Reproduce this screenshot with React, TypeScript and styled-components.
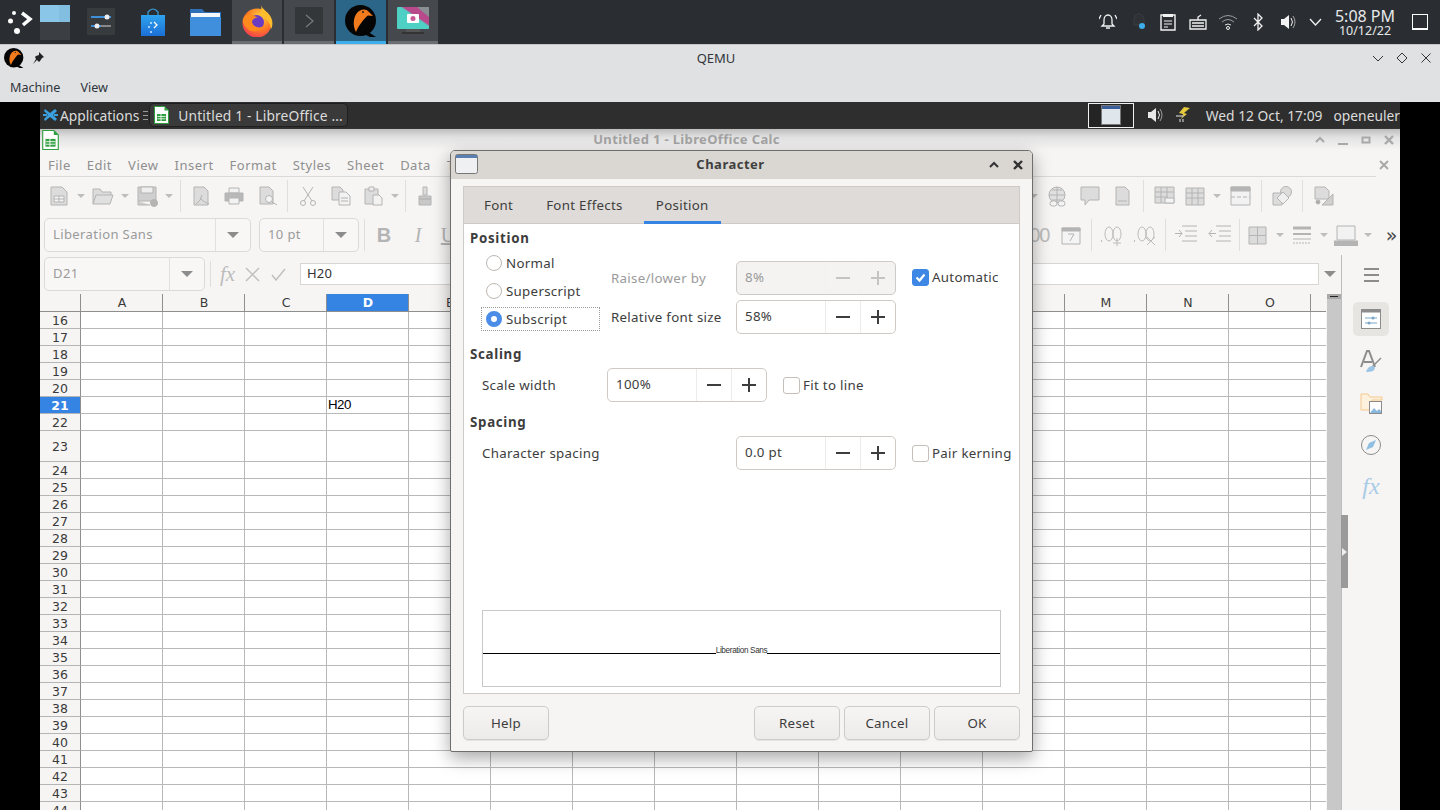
import * as React from 'react';
import styled, {createGlobalStyle} from 'styled-components';

const GlobalStyle = createGlobalStyle`
  html, body {
    margin: 0;
    padding: 0;
    background: #000;
    font-family: "Noto Sans", "Liberation Sans", sans-serif;
  }
  * { box-sizing: border-box; }
`;

const Screen = styled.div`
  position: relative;
  width: 1440px;
  height: 810px;
  overflow: hidden;
  background: #000;
  display: flex;
  flex-direction: column;
`;

/* host panel */
const HostPanel = styled.div`
  height: 44px;
  flex: none;
  background: #2a2e32;
  display: flex;
  align-items: stretch;
  color: #fcfcfc;
`;
const Launcher = styled.div`
  width: 40px;
  display: flex;
  align-items: center;
`;
const Pager = styled.div`
  width: 30px;
  margin-right: 5px;
  display: flex;
  align-items: center;
`;
const PanelSlot = styled.div`
  width: 52px;
  display: flex;
  align-items: center;
  justify-content: center;
`;
const TaskList = styled.div`
  display: flex;
  gap: 2px;
  margin-left: 1px;
`;
const TaskButton = styled.div<{$active?: boolean}>`
  width: 50px;
  display: flex;
  align-items: center;
  justify-content: center;
  padding-top: 1px;
  background: ${p => (p.$active ? '#2b6688' : '#45494e')};
  border-bottom: 3px solid ${p => (p.$active ? '#3daee9' : '#6a6e72')};
`;
const Tray = styled.div`
  margin-left: auto;
  display: flex;
  align-items: center;
`;
const TraySlot = styled.div<{$w: number; $gap: number}>`
  width: ${p => p.$w}px;
  margin-left: ${p => p.$gap}px;
  display: flex;
  justify-content: center;
`;
const Clock = styled.div`
  width: 62px;
  margin-left: 12px;
  text-align: center;
  font-size: 16px;
  line-height: 15px;
  padding-top: 2px;
  color: #e6e8ea;
  small {
    display: block;
    font-size: 12.5px;
    line-height: 13px;
  }
`;
const ShowDesktop = styled.div`
  width: 16px;
  height: 16px;
  margin: 0 12px 0 16px;
  border: 1.5px solid #fcfcfc;
  border-bottom-width: 2px;
`;

/* QEMU window frame */
const QemuFrame = styled.div`
  height: 58px;
  flex: none;
  background: #dfe1e3;
  border-top: 1px solid #c4c6c8;
  color: #31363b;
`;
const QemuTitle = styled.div`
  height: 26px;
  display: flex;
  align-items: center;
  padding: 0 8px 0 4px;
  gap: 8px;
`;
const QemuName = styled.div`
  flex: 1;
  text-align: center;
  font-size: 13px;
  padding-left: 16px;
`;
const FrameControls = styled.div`
  display: flex;
  gap: 12px;
`;
const QemuMenu = styled.div`
  height: 31px;
  display: flex;
  align-items: center;
  padding: 2px 0 0 10px;
  gap: 20px;
  font-size: 12.6px;
`;

/* guest desktop */
const Guest = styled.div`
  flex: 1;
  margin: 0 40px;
  display: flex;
  flex-direction: column;
  min-height: 0;
  background: #f6f5f4;
`;
const GuestPanel = styled.div`
  height: 26px;
  flex: none;
  background: #2e2e2e;
  color: #dcdcdc;
  display: flex;
  align-items: center;
  font-size: 13.8px;
  white-space: nowrap;
  overflow: hidden;
`;
const AppsLabel = styled.span`
  margin-left: 2px;
`;
const Handle = styled.span`
  width: 5px;
  height: 9px;
  margin: 0 1px 0 4px;
  border-top: 1px solid #999;
  border-bottom: 1px solid #999;
  &::after {
    content: '';
    display: block;
    height: 1px;
    margin-top: 3px;
    background: #999;
  }
`;
const GuestTask = styled.div`
  width: 199px;
  height: 24px;
  display: flex;
  align-items: center;
  gap: 9px;
  padding-left: 4px;
  letter-spacing: 0.15px;
  background: #3a3a3a;
  border: 1px solid #1f1f1f;
  border-radius: 5px;
`;
const GuestTray = styled.div`
  margin-left: auto;
  display: flex;
  align-items: center;
`;
const WindowSwitch = styled.div`
  width: 46px;
  height: 25px;
  border: 1px solid #f0f0f0;
  background: #242424;
  display: flex;
  align-items: center;
  justify-content: center;
`;
const GuestSlot = styled.div<{$gap: number}>`
  margin-left: ${p => p.$gap}px;
  display: flex;
  align-items: center;
`;

/* calc window */
const CalcTitle = styled.div`
  height: 22px;
  flex: none;
  display: flex;
  align-items: center;
  background: linear-gradient(#bdbdbd 0, #e2e2e2 40%, #f6f5f4 100%);
  border-top: 1px solid #333;
  padding: 0 5px 0 2px;
`;
const TitleText = styled.div`
  flex: 1;
  text-align: center;
  font-size: 13px;
  font-weight: 700;
  letter-spacing: 0.35px;
  color: #a3a3a3;
  padding-bottom: 2px;
`;
const TitleButtons = styled.div`
  display: flex;
  align-items: center;
  gap: 11px;
`;
const MenuRow = styled.div`
  height: 27px;
  flex: none;
  display: flex;
`;
const MenuList = styled.div`
  width: 1336px;
  display: flex;
  align-items: center;
  gap: 16px;
  padding: 3px 0 0 8px;
  border-bottom: 1px solid #dcdad7;
  font-size: 13px;
  letter-spacing: 0.5px;
  color: #8f8f8f;
  overflow: hidden;
`;
const DocClose = styled.div`
  width: 24px;
  display: flex;
  align-items: center;
  justify-content: center;
  padding: 3px 8px 0 0;
`;
const ToolRow = styled.div<{$h: number}>`
  height: ${p => p.$h}px;
  flex: none;
  display: flex;
  align-items: center;
  justify-content: space-between;
`;
const ToolGroup = styled.div<{$end?: number}>`
  display: flex;
  align-items: center;
  padding-right: ${p => p.$end ?? 0}px;
`;
const ToolSlot = styled.div<{$w: number; $gap: number}>`
  width: ${p => p.$w}px;
  margin-left: ${p => p.$gap}px;
  flex: none;
  display: flex;
  align-items: center;
  justify-content: center;
`;
const Separator = styled.div<{$h?: number}>`
  width: 1px;
  height: ${p => p.$h ?? 32}px;
  background: #e0dedb;
`;
const DropArrow = styled.div`
  width: 0;
  height: 0;
  border-left: 4px solid transparent;
  border-right: 4px solid transparent;
  border-top: 4px solid #bdbdbd;
`;
const ComboArrow = styled.div`
  width: 0;
  height: 0;
  border-left: 6px solid transparent;
  border-right: 6px solid transparent;
  border-top: 6px solid #8c8c8c;
`;
const Combo = styled.div<{$w: number; $btn: number; $gap: number}>`
  width: ${p => p.$w}px;
  height: 34px;
  margin-left: ${p => p.$gap}px;
  flex: none;
  display: flex;
  background: #f8f7f6;
  border: 1px solid #dcdad7;
  border-radius: 5px;
  font-size: 13px;
  letter-spacing: 0.4px;
  color: #9a9a9a;
  span {
    flex: 1;
    padding-left: 8px;
    line-height: 31px;
  }
  div.arrow {
    width: ${p => p.$btn}px;
    border-left: 1px solid #e2e0dd;
    display: flex;
    align-items: center;
    justify-content: center;
  }
`;
const FormatGlyph = styled.span<{$bold?: boolean; $italic?: boolean; $under?: boolean}>`
  font-family: "Liberation Serif", serif;
  font-size: 20px;
  line-height: 24px;
  color: #b4b4b4;
  font-weight: ${p => (p.$bold ? 700 : 400)};
  font-style: ${p => (p.$italic ? 'italic' : 'normal')};
  text-decoration: ${p => (p.$under ? 'underline' : 'none')};
  ${p => p.$bold && 'font-family: "Liberation Sans", sans-serif;'}
`;
const NumGlyph = styled.span`
  font-family: "Liberation Sans", sans-serif;
  font-size: 20px;
  letter-spacing: -1px;
  margin-right: 6px;
  color: #bcbcbc;
  white-space: nowrap;
`;
const More = styled.span`
  font-size: 19px;
  line-height: 20px;
  color: #4a4a4a;
  font-family: "DejaVu Sans", sans-serif;
`;

const WorkRow = styled.div`
  flex: 1;
  display: flex;
  min-height: 0;
`;
const SheetColumn = styled.div`
  width: 1302px;
  display: flex;
  flex-direction: column;
  border-right: 1px solid #bdbdbd;
`;
const FormulaRow = styled.div`
  height: 39px;
  flex: none;
  display: flex;
  align-items: center;
  padding-bottom: 1px;
`;
const FormulaFx = styled.span`
  font-family: "Liberation Serif", serif;
  font-style: italic;
  font-size: 21px;
  line-height: 24px;
  color: #bcbcbc;
`;
const FormulaInput = styled.div`
  flex: 1;
  height: 22px;
  margin-left: 14px;
  padding-left: 6px;
  background: #fff;
  border: 1px solid #d8d6d3;
  font-size: 13px;
  letter-spacing: 0.2px;
  line-height: 19px;
  color: #333;
`;
const FormulaArrow = styled.div`
  width: 22px;
  display: flex;
  justify-content: center;
`;
const SheetArea = styled.div`
  flex: 1;
  display: flex;
  min-height: 0;
`;
const Grid = styled.div`
  width: 1286px;
  overflow: hidden;
  background: #fff;
`;
const GridRow = styled.div<{$h: number}>`
  height: ${p => p.$h}px;
  display: grid;
  grid-template-columns: 41px repeat(16, 82px);
`;
const HeaderCell = styled.div<{$on?: boolean; $side?: boolean}>`
  display: flex;
  align-items: center;
  justify-content: center;
  padding-left: ${p => (p.$side ? 0 : 1)}px;
  font-family: "DejaVu Sans", sans-serif;
  font-size: 12.5px;
  color: ${p => (p.$on ? '#fff' : '#3a3a3a')};
  font-weight: ${p => (p.$on ? 700 : 400)};
  background: ${p => (p.$on ? '#3584e4' : '#f6f5f4')};
  border-right: 1px solid #8e8e8e;
  border-bottom: 1px solid ${p => (p.$side ? '#b5b5b5' : '#8e8e8e')};
`;
const Cell = styled.div`
  border-right: 1px solid #b8b8b8;
  border-bottom: 1px solid #b8b8b8;
  font-family: "Liberation Sans", sans-serif;
  font-size: 13.3px;
  letter-spacing: -0.5px;
  line-height: 15px;
  padding-left: 1px;
  color: #000;
`;
const ScrollTrack = styled.div`
  width: 15px;
  background: #c8c8c8;
  border-left: 1px solid #f6f5f4;
`;
const ScrollCap = styled.div`
  height: 5px;
  background: #a9a9a9;
  display: flex;
  align-items: center;
  justify-content: center;
  &::after {
    content: '';
    width: 8px;
    height: 1px;
    background: #222;
  }
`;
const Sidebar = styled.div`
  flex: 1;
  display: flex;
  flex-direction: column;
  align-items: center;
  padding-top: 13px;
`;
const Hamburger = styled.div`
  width: 15px;
  height: 14px;
  margin-bottom: 16px;
  border-top: 2px solid #8c8c8c;
  border-bottom: 2px solid #8c8c8c;
  display: flex;
  align-items: center;
  &::after {
    content: '';
    width: 100%;
    height: 2px;
    background: #8c8c8c;
  }
`;
const DeckButton = styled.div<{$on?: boolean}>`
  width: 36px;
  height: 34px;
  margin: 4px 0;
  border-radius: 5px;
  display: flex;
  align-items: center;
  justify-content: center;
  background: ${p => (p.$on ? '#e6e5e2' : 'transparent')};
`;
const DeckFx = styled.span`
  font-family: "Liberation Serif", serif;
  font-style: italic;
  font-size: 24px;
  line-height: 28px;
  margin-bottom: 2px;
  color: #a8cbe6;
`;
const SideGrip = styled.div`
  position: absolute;
  left: 1341px;
  top: 515px;
  width: 7px;
  height: 73px;
  background: #9a9a9a;
  display: flex;
  align-items: center;
  padding-left: 1px;
  &::after {
    content: '';
    border-left: 5px solid #eee;
    border-top: 4px solid transparent;
    border-bottom: 4px solid transparent;
  }
`;

/* character dialog */
const Dialog = styled.div`
  position: absolute;
  left: 450px;
  top: 150px;
  width: 583px;
  height: 602px;
  display: flex;
  flex-direction: column;
  background: #f6f5f4;
  border: 1px solid #6e6e6e;
  border-radius: 5px 5px 2px 2px;
  box-shadow: 0 6px 18px rgba(0, 0, 0, 0.35);
  color: #3d3d3d;
  font-size: 13.3px;
  letter-spacing: 0.3px;
`;
const DialogTitle = styled.div`
  height: 28px;
  flex: none;
  display: flex;
  align-items: center;
  padding: 0 8px 2px 4px;
  background: #dad7d3;
  border-radius: 4px 4px 0 0;
`;
const DialogName = styled.div`
  flex: 1;
  text-align: center;
  font-weight: 700;
  font-size: 13px;
  letter-spacing: 0.5px;
  padding-right: 5px;
  color: #3f3f3f;
`;
const DialogButtons = styled.div`
  display: flex;
  align-items: center;
  gap: 12px;
  margin-top: 2px;
`;
const DialogBody = styled.div`
  flex: 1;
  display: flex;
  flex-direction: column;
  padding: 7px 12px 11px;
  min-height: 0;
`;
const Notebook = styled.div`
  flex: 1;
  display: flex;
  flex-direction: column;
  background: #fff;
  border: 1px solid #cfcac5;
  min-height: 0;
`;
const TabBar = styled.div`
  height: 37px;
  flex: none;
  display: flex;
  gap: 9px;
  background: #dedbd8;
  border-bottom: 1px solid #cfcac5;
  padding-left: 8px;
`;
const Tab = styled.div<{$on?: boolean}>`
  padding: 2px 12px 0;
  display: flex;
  align-items: center;
  margin-bottom: -1px;
  color: #3d3d3d;
  border-bottom: 3px solid ${p => (p.$on ? '#3584e4' : 'transparent')};
`;
const TabPage = styled.div`
  flex: 1;
  display: flex;
  flex-direction: column;
  padding: 6px;
  min-height: 0;
`;
const SectionTitle = styled.div<{$top: number}>`
  height: 16px;
  margin-top: ${p => p.$top}px;
  font-weight: 700;
  line-height: 16px;
  letter-spacing: 0.7px;
`;
const PositionRow = styled.div`
  display: flex;
  align-items: flex-start;
  margin: 3px 0 0 11px;
`;
const RadioColumn = styled.div`
  width: 119px;
  display: flex;
  flex-direction: column;
`;
const RadioRow = styled.div<{$focus?: boolean}>`
  height: ${p => (p.$focus ? 24 : 28)}px;
  margin-top: ${p => (p.$focus ? 2 : 0)}px;
  display: flex;
  align-items: center;
  gap: 4px;
  padding-left: 4px;
  border: 1px dotted ${p => (p.$focus ? '#9a9a9a' : 'transparent')};
`;
const Radio = styled.div<{$on?: boolean}>`
  width: 16px;
  height: 16px;
  border-radius: 50%;
  flex: none;
  background: #fff;
  border: ${p => (p.$on ? '5px solid #4a8ce6' : '1px solid #bdb8b3')};
`;
const FieldGrid = styled.div`
  margin: 12px 0 0 11px;
  display: grid;
  grid-template-columns: 125px 160px;
  row-gap: 5px;
  align-items: center;
`;
const FieldLabel = styled.div<{$off?: boolean; $w?: number}>`
  color: ${p => (p.$off ? '#9b9b9b' : '#3d3d3d')};
  ${p => p.$w && `width: ${p.$w}px;`}
`;
const Spin = styled.div<{$off?: boolean}>`
  width: 160px;
  height: 34px;
  flex: none;
  display: flex;
  background: ${p => (p.$off ? '#f4f3f2' : '#fff')};
  border: 1px solid #cfcac5;
  border-radius: 5px;
  color: ${p => (p.$off ? '#9b9b9b' : '#3d3d3d')};
`;
const SpinValue = styled.div`
  flex: 1;
  padding-left: 8px;
  line-height: 30px;
`;
const SpinButton = styled.div<{$off?: boolean}>`
  width: 35px;
  border-left: 1px solid #eeecea;
  display: flex;
  align-items: center;
  justify-content: center;
  opacity: ${p => (p.$off ? 0.25 : 1)};
`;
const CheckWrap = styled.div<{$gap: number; $drop?: number}>`
  display: flex;
  align-items: center;
  gap: 3px;
  white-space: nowrap;
  margin-left: ${p => p.$gap}px;
  margin-top: ${p => p.$drop ?? 0}px;
`;
const CheckBox = styled.div<{$on?: boolean}>`
  width: 17px;
  height: 17px;
  border-radius: 3px;
  flex: none;
  display: flex;
  align-items: center;
  justify-content: center;
  background: ${p => (p.$on ? '#3f87e5' : '#fff')};
  border: 1px solid ${p => (p.$on ? '#3f87e5' : '#c4bfba')};
`;
const FieldRow = styled.div`
  display: flex;
  align-items: center;
  margin: 6px 0 0 12px;
`;
const Preview = styled.div`
  margin: auto 0 0 12px;
  width: 519px;
  height: 77px;
  flex: none;
  padding: 9px 0 0;
  display: flex;
  align-items: center;
  border: 1px solid #c8c8c8;
`;
const PreviewLine = styled.div`
  flex: 1;
  height: 1px;
  background: #000;
`;
const PreviewText = styled.div`
  font-family: "Liberation Sans", sans-serif;
  font-size: 8.2px;
  letter-spacing: -0.35px;
  line-height: 10px;
  margin-top: -4px;
  color: #333;
`;
const ButtonRow = styled.div`
  display: flex;
  gap: 4px;
  margin-top: 12px;
`;
const Button = styled.div<{$last?: boolean}>`
  width: 86px;
  height: 34px;
  display: flex;
  align-items: center;
  justify-content: center;
  border: 1px solid #cfcac5;
  border-radius: 5px;
  background: linear-gradient(#f6f5f4, #edebe9);
  box-shadow: 0 1px 1px rgba(0, 0, 0, 0.07);
  ${p => p.$last && 'margin-right: auto;'}
`;

/* drawings */
const Launch = () => (
  <svg width="40" height="44" viewBox="0 0 40 44">
    <g fill="#fcfcfc">
      <circle cx="14" cy="13" r="2" />
      <circle cx="10.5" cy="21" r="2.5" />
      <circle cx="17" cy="31" r="3" />
    </g>
    <path d="M22 13l8 6-7 6" fill="none" stroke="#fcfcfc" strokeWidth="3.5" />
  </svg>
);
const PagerIcon = () => (
  <svg width="30" height="35" viewBox="0 0 30 35">
    <rect width="30" height="17" fill="#89c6e8" />
    <rect x="19" y="0" width="11" height="17" fill="#81bee0" />
    <rect y="17" width="30" height="18" fill="#3b3f44" />
  </svg>
);
const SettingsApp = () => (
  <svg width="28" height="28" viewBox="0 0 28 28">
    <rect width="28" height="27" rx="1" fill="#383b3e" />
    <path d="M4 9h20" stroke="#3f8fd8" strokeWidth="2" />
    <path d="M4 18h20" stroke="#888" strokeWidth="2" />
    <path d="M4 18h10" stroke="#3f8fd8" strokeWidth="2" />
    <circle cx="20" cy="9" r="2.5" fill="#eee" />
    <circle cx="10" cy="18" r="2.5" fill="#eee" />
  </svg>
);
const StoreApp = () => (
  <svg width="26" height="28" viewBox="0 0 26 28">
    <defs>
      <linearGradient id="storeG" x1="0" y1="0" x2="0" y2="1">
        <stop offset="0" stopColor="#2fa3ee" />
        <stop offset="1" stopColor="#1b6fd6" />
      </linearGradient>
    </defs>
    <path d="M8 9V4q5-6 10 0v5" fill="none" stroke="#3b9fd8" strokeWidth="1.2" />
    <path d="M1 7h24v21H1z" fill="url(#storeG)" />
    <circle cx="11" cy="15" r="1" fill="#cfe8ff" />
    <circle cx="9" cy="19" r="1" fill="#cfe8ff" />
    <circle cx="11" cy="24" r="1" fill="#cfe8ff" />
    <path d="M14 14l3 3-3 3" fill="none" stroke="#fff" strokeWidth="1.3" />
  </svg>
);
const FolderApp = () => (
  <svg width="31" height="28" viewBox="0 0 31 28">
    <path d="M0 1h12l3 3h16v24H0z" fill="#2f6fb5" />
    <rect x="1" y="5" width="29" height="5" fill="#f4f8fb" />
    <path d="M0 9h31v19H0z" fill="#3f8fdc" />
  </svg>
);
const FirefoxApp = () => (
  <svg width="32" height="32" viewBox="0 0 32 32">
    <defs>
      <radialGradient id="ffG" cx="0.6" cy="0.3" r="0.8">
        <stop offset="0" stopColor="#ffcf3c" />
        <stop offset="0.55" stopColor="#ff7a24" />
        <stop offset="1" stopColor="#f0325a" />
      </radialGradient>
    </defs>
    <circle cx="16" cy="18" r="14.5" fill="url(#ffG)" />
    <path d="M20 0c1 5 9 7 11 15 1 4 0 8-1 9-1-8-7-13-14-14 4-2 5-6 4-10z" fill="#ffbd2e" />
    <circle cx="15.5" cy="17.5" r="7.5" fill="#6a3cc4" />
    <path d="M2 14c3-5 6-5 8-5 2 2 5 3 7 3-3 1-6 2-6 5 1 5 7 7 12 4-3 5-10 7-15 4-4-3-7-7-6-11z" fill="#ff8a1e" />
  </svg>
);
const TerminalApp = () => (
  <svg width="28" height="28" viewBox="0 0 28 28">
    <rect width="28" height="27" rx="1" fill="#33373a" />
    <path d="M11 8l7 6-7 6" fill="none" stroke="#777" strokeWidth="1.3" />
  </svg>
);
const QemuApp = ({size}: {size: number}) => (
  <svg width={size} height={size} viewBox="0 0 32 32">
    <circle cx="15.5" cy="15.5" r="15.5" fill="#050505" />
    <path d="M22 26l9 6h-6l-8-4z" fill="#050505" />
    <path d="M11 27C7 20 9 11 12 8c3-4 9-5 12-1l4 4-5-.5c-2 1-3 3-5 5-2 3-5 6-7 11.500z" fill="#f07a1c" />
    <circle cx="18" cy="7" r="1" fill="#222" />
  </svg>
);
const ShotApp = () => (
  <svg width="32" height="28" viewBox="0 0 32 28">
    <defs>
      <linearGradient id="shotG" x1="0" y1="1" x2="1" y2="0">
        <stop offset="0.55" stopColor="#4fd0c4" />
        <stop offset="0.6" stopColor="#b84a8c" />
      </linearGradient>
    </defs>
    <rect width="32" height="22" rx="1" fill="url(#shotG)" />
    <path d="M20 0h12v10z" fill="#8a8f94" />
    <rect x="9" y="22" width="14" height="3" fill="#555" />
    <rect x="5" y="25" width="22" height="2" fill="#333" />
    <rect x="10" y="7" width="12" height="9" rx="1" fill="#fff" />
    <circle cx="16" cy="11.500" r="2.500" fill="#c55a96" />
  </svg>
);
const TrayLine = ({d, w, h}: {d: string; w: number; h: number}) => (
  <svg width={w} height={h} viewBox={`0 0 ${w} ${h}`} fill="none" stroke="#f2f2f2" strokeWidth="1.3">
    <path d={d} />
  </svg>
);
const Activity = () => (
  <svg width="16" height="18" viewBox="0 0 16 18">
    <path d="M8 1a5 7 0 0 0-4 9v2h10V9a5 7 0 0 0-6-8z" fill="#2e3236" stroke="#3a3e42" />
    <circle cx="12" cy="13" r="3" fill="#3daee9" />
  </svg>
);
const Clipboard = () => (
  <svg width="16" height="18" viewBox="0 0 16 18">
    <path d="M1 2h14v15H1z" fill="none" stroke="#f2f2f2" strokeWidth="1.4" />
    <path d="M3 1h10v3H3z" fill="#f2f2f2" />
    <path d="M4 8h8M4 11h8M4 14h4" stroke="#f2f2f2" />
  </svg>
);
const Wifi = () => (
  <svg width="20" height="16" viewBox="0 0 20 16" fill="none" stroke="#9a9da0">
    <path d="M1 5q9-7 18 0M4 8q6-5 12 0" />
    <path d="M7 11q3-2 6 0" stroke="#dddddd" />
    <circle cx="10" cy="14" r="1.500" stroke="#f2f2f2" />
  </svg>
);
const Speaker = ({color}: {color: string}) => (
  <svg width="16" height="16" viewBox="0 0 16 16">
    <path d="M1 5h3l5-4v14l-5-4H1z" fill={color} />
    <path d="M11 4q3 4 0 8" fill="none" stroke={color} />
    <path d="M13 2q4 6 0 12" fill="none" stroke={color} strokeOpacity="0.6" />
  </svg>
);
const CalcDoc = ({w, h}: {w: number; h: number}) => (
  <svg width={w} height={h} viewBox="0 0 15 18">
    <path d="M.5.5h10l4 4v13H.500z" fill="#fff" stroke="#2f9e3f" />
    <path d="M10.500.5l4 4h-4z" fill="#2f9e3f" />
    <path d="M3 8h9v7H3z" fill="#2f9e3f" />
    <path d="M3.500 10.500h8M3.500 12.800h8M7 8v7" stroke="#fff" strokeWidth="0.8" />
  </svg>
);
const AppsIcon = () => (
  <svg width="15" height="14" viewBox="0 0 15 14">
    <path d="M2 1l5 4 5-4 2 2-4 4 4 4-2 2-5-4-5 4-1-2 4-4-4-4z" fill="#3aa0e0" />
    <path d="M0 7h4M11 7h4" stroke="#3aa0e0" strokeWidth="2" />
  </svg>
);
const BoltIcon = () => (
  <svg width="16" height="16" viewBox="0 0 16 16">
    <path d="M9 0l6 1-6 5 3 1-6 5 2-5-4-1z" fill="#e6c93c" />
    <path d="M1 9h8M5 12v3M8 12v3" stroke="#aaa" strokeWidth="1.500" />
  </svg>
);
const GuestWindow = () => (
  <svg width="20" height="20" viewBox="0 0 20 20">
    <rect width="20" height="20" fill="#777" />
    <rect x="1" y="1" width="18" height="18" fill="#dfe6ec" />
    <rect x="1" y="1" width="18" height="3" fill="#3c5f9c" />
  </svg>
);
const WinBtn = ({d, color, width = 1.4}: {d: string; color: string; width?: number}) => (
  <svg width="12" height="12" viewBox="0 0 12 12" fill="none" stroke={color} strokeWidth={width}>
    <path d={d} />
  </svg>
);
const Gray = ({w, h, children}: {w: number; h: number; children: React.ReactNode}) => (
  <svg width={w} height={h} viewBox={`0 0 ${w} ${h}`} fill="#dcdcdc" stroke="#b4b4b4" strokeWidth="1">
    {children}
  </svg>
);
const NewDoc = () => (
  <Gray w={18} h={20}>
    <path d="M1 1h11l5 5v13H1z" />
    <path d="M4 10h10v6H4zM4 13h10M9 10v6" fill="#f4f4f4" />
  </Gray>
);
const OpenDoc = () => (
  <Gray w={22} h={17}>
    <path d="M1 16V1h7l2 3h9v3" />
    <path d="M1 16l3-9h17l-3 9z" fill="#e0e0e0" />
  </Gray>
);
const SaveDoc = () => (
  <Gray w={21} h={21}>
    <path d="M1 1h18v14H1zM1 15v4h12" fill="#cfcfcf" />
    <path d="M4 1h12v6H4z" fill="#eee" />
    <circle cx="17" cy="17" r="3.500" fill="#b4b4b4" />
  </Gray>
);
const PdfDoc = () => (
  <Gray w={18} h={20}>
    <path d="M1 1h10l4 4v14H1z" />
    <path d="M7 12q3 4 9 6M9 9q-1 6-6 9" fill="none" />
  </Gray>
);
const Printer = () => (
  <Gray w={20} h={18}>
    <path d="M5 1h10v5H5z" fill="#f2f2f2" />
    <path d="M1 6h18v8H1z" fill="#b8b8b8" />
    <path d="M5 11h10v6H5z" fill="#f2f2f2" />
  </Gray>
);
const PreviewDoc = () => (
  <Gray w={19} h={20}>
    <path d="M1 1h9l4 4v13H1z" />
    <circle cx="10" cy="13" r="3.500" fill="#f4f4f4" />
    <path d="M13 16l5 3" />
  </Gray>
);
const Scissors = () => (
  <Gray w={18} h={20}>
    <path d="M14 1L5 15M4 1l9 14" fill="none" />
    <circle cx="4" cy="17" r="2.500" fill="none" />
    <circle cx="14" cy="17" r="2.500" fill="none" />
  </Gray>
);
const CopyDoc = () => (
  <Gray w={20} h={20}>
    <path d="M1 1h8l3 3v10H1z" />
    <path d="M8 6h7l4 4v9H8zM10 12h7M10 15h7" fill="#f2f2f2" />
  </Gray>
);
const Paste = () => (
  <Gray w={19} h={20}>
    <path d="M1 3h13v15H1z" />
    <path d="M5 1h5v4H5z" fill="#eee" />
    <path d="M9 9h6l3 3v7H9z" fill="#f2f2f2" />
  </Gray>
);
const Brush = () => (
  <Gray w={14} h={20}>
    <path d="M5 1h4v8H5z" />
    <path d="M1 10h12v3H1zM1 13h12v6H1z" fill="#c8c8c8" />
  </Gray>
);
const LinkGlobe = () => (
  <Gray w={21} h={21}>
    <circle cx="10" cy="9" r="8" fill="#e0e0e0" />
    <path d="M2 9h16M10 1v16M5 4h10M5 14h10" fill="none" />
    <rect x="3" y="15" width="7" height="5" rx="2.500" fill="#f4f4f4" />
    <rect x="11" y="15" width="7" height="5" rx="2.500" fill="#f4f4f4" />
  </Gray>
);
const Comment = () => (
  <Gray w={20} h={20}>
    <path d="M1 1h18v13H9l-4 5v-5H1z" />
  </Gray>
);
const NoteDoc = () => (
  <Gray w={15} h={20}>
    <path d="M1 1h9l4 4v14H1z" />
    <path d="M3 15h9" />
  </Gray>
);
const PivotTable = () => (
  <Gray w={21} h={20}>
    <path d="M1 1h19v16H1zM1 6h19M1 11h13M7 1v16M13 1v10" />
    <path d="M11 12h9v5h-9z" fill="#f4f4f4" />
  </Gray>
);
const InsertSheet = () => (
  <Gray w={20} h={20}>
    <path d="M1 2h18v17H1zM1 7h18M1 12h18M7 2v17M13 2v17" />
  </Gray>
);
const HeaderDoc = () => (
  <Gray w={21} h={20}>
    <path d="M1 1h19v18H1z" fill="#f2f2f2" />
    <path d="M1 1h19v4H1z" fill="#b4b4b4" />
    <path d="M1 11h19" strokeDasharray="4 2" />
  </Gray>
);
const Shapes = () => (
  <Gray w={20} h={20}>
    <circle cx="14" cy="6" r="5.500" />
    <path d="M1 7h9v12H1z" />
    <path d="M11 6l6 6-6 6-6-6z" fill="#efefef" />
  </Gray>
);
const DrawDoc = () => (
  <Gray w={20} h={20}>
    <path d="M1 1h10l4 4v8H1z" />
    <path d="M8 19l11-11v11z" fill="#cfcfcf" />
    <circle cx="4" cy="16" r="2" fill="#aaa" />
  </Gray>
);
const Calendar = () => (
  <Gray w={20} h={20}>
    <path d="M1 3h18v16H1z" fill="#f4f4f4" />
    <path d="M1 3h18v3H1z" fill="#b4b4b4" />
    <path d="M7 9h6l-4 7" fill="none" />
  </Gray>
);
const Indent = ({back}: {back?: boolean}) => (
  <Gray w={23} h={20}>
    <path d="M8 1h15M11 6h12M11 11h12M8 16h15" fill="none" />
    <path d={back ? 'M8 8.500H1M4 5L1 8.500 4 12' : 'M1 8.500h7M5 5l3 3.500L5 12'} fill="none" />
  </Gray>
);
const Borders = () => (
  <Gray w={19} h={19}>
    <path d="M1 1h17v17H1z" />
    <path d="M9.500 1v17M1 9.500h17" fill="none" />
  </Gray>
);
const LineStyles = () => (
  <Gray w={18} h={19}>
    <path d="M0 2h18" strokeWidth="3" fill="none" />
    <path d="M0 8h18" strokeWidth="2" fill="none" />
    <path d="M0 13h18" fill="none" />
    <path d="M0 17h18" strokeDasharray="2 1" fill="none" />
  </Gray>
);
const FrameIcon = () => (
  <Gray w={24} h={21}>
    <path d="M3 1h18v14H3z" fill="#f2f2f2" />
    <path d="M0 16h24v5H0z" fill="#b4b4b4" />
  </Gray>
);
const AddDecimal = ({remove}: {remove?: boolean}) => (
  <svg width="24" height="24" viewBox="0 0 24 24" fill="none" stroke="#bcbcbc" strokeWidth="1">
    <path d="M1 18h1" strokeWidth="2" />
    <ellipse cx="9" cy="11" rx="4" ry="7" />
    <ellipse cx="17" cy="11" rx="4" ry="7" />
    {remove ? <path d="M14 14l8 8M22 14l-8 8" /> : <path d="M17 15v8M13 20h8" />}
  </svg>
);
const DeckProps = () => (
  <svg width="20" height="20" viewBox="0 0 20 20">
    <rect x="0.500" y="0.500" width="19" height="19" fill="#fff" stroke="#8c8c8c" />
    <rect x="0.500" y="0.500" width="19" height="3" fill="#8c8c8c" />
    <path d="M4 9h12M4 14h12" stroke="#7aa7c7" />
    <circle cx="12" cy="9" r="1.500" fill="#7aa7c7" />
    <circle cx="8" cy="14" r="1.500" fill="#7aa7c7" />
  </svg>
);
const DeckStyles = () => (
  <svg width="22" height="23" viewBox="0 0 22 23">
    <path d="M1 17L7 1h2l6 16M4 12h8" fill="none" stroke="#8c8c8c" strokeWidth="2" />
    <path d="M21 8l-9 9" stroke="#8c8c8c" strokeWidth="1.500" />
    <path d="M6 22q2-7 8-6 2 3-1 5-3 1-7 1z" fill="#9cc4e4" />
  </svg>
);
const DeckGallery = () => (
  <svg width="23" height="21" viewBox="0 0 23 21">
    <path d="M1 17V1h7l2 3h12v3" fill="#fdf0dc" stroke="#f4c98c" />
    <path d="M1 17h11V7h10" fill="#fdf0dc" stroke="#f4c98c" />
    <rect x="9.500" y="8.500" width="12" height="12" fill="#fff" stroke="#8c8c8c" />
    <path d="M10 20l4-5 3 3 2-2 2 2v2z" fill="#8ab8dc" />
  </svg>
);
const DeckCompass = () => (
  <svg width="20" height="20" viewBox="0 0 20 20">
    <circle cx="10" cy="10" r="9.500" fill="none" stroke="#8c8c8c" />
    <path d="M15 5l-3 7-7 3 3-7z" fill="#8ebfe2" />
  </svg>
);
const Minus = () => (
  <svg width="14" height="14" viewBox="0 0 14 14">
    <path d="M0 7h14" stroke="#3d3d3d" strokeWidth="2" />
  </svg>
);
const Plus = () => (
  <svg width="14" height="14" viewBox="0 0 14 14">
    <path d="M0 7h14M7 0v14" stroke="#3d3d3d" strokeWidth="2" />
  </svg>
);
const Tick = () => (
  <svg width="13" height="13" viewBox="0 0 13 13">
    <path d="M2.500 6.500l3 3 5-6" fill="none" stroke="#fff" strokeWidth="2.200" />
  </svg>
);
const WindowGlyph = () => (
  <svg width="23" height="20" viewBox="0 0 23 20">
    <rect x="0.500" y="0.500" width="22" height="19" rx="2" fill="#eef0f2" stroke="#777" />
    <rect x="1" y="1" width="21" height="3" fill="#5a7fb0" />
  </svg>
);

const arrow = <DropArrow />;
const sep = <Separator />;

type Tool = [React.ReactNode, number, number];

const fileTools: Tool[] = [
  [<NewDoc />, 18, 10], [arrow, 8, 9], [<OpenDoc />, 22, 7], [arrow, 8, 7], [<SaveDoc />, 21, 8], [arrow, 8, 7],
  [sep, 1, 7], [<PdfDoc />, 18, 12], [<Printer />, 20, 13], [<PreviewDoc />, 19, 15], [sep, 1, 9],
  [<Scissors />, 18, 11], [<CopyDoc />, 20, 14], [<Paste />, 19, 13], [arrow, 8, 8], [sep, 1, 6], [<Brush />, 14, 12],
];
const insertTools: Tool[] = [
  [arrow, 8, 0], [<LinkGlobe />, 21, 9], [<Comment />, 20, 12], [<NoteDoc />, 15, 15], [sep, 1, 13],
  [<PivotTable />, 21, 10], [<InsertSheet />, 20, 10], [arrow, 8, 8], [<HeaderDoc />, 21, 9], [sep, 1, 10],
  [<Shapes />, 20, 10], [sep, 1, 10], [<DrawDoc />, 20, 11],
];
const numberTools: Tool[] = [
  [<NumGlyph>.00</NumGlyph>, 20, 0], [<Calendar />, 20, 11], [sep, 1, 10], [<AddDecimal />, 24, 8], [<AddDecimal remove />, 24, 9],
  [sep, 1, 8], [<Indent />, 23, 8], [<Indent back />, 23, 11], [sep, 1, 8], [<Borders />, 19, 8], [arrow, 8, 9],
  [<LineStyles />, 18, 9], [arrow, 8, 9], [<FrameIcon />, 24, 6], [arrow, 8, 6], [<More>»</More>, 13, 13],
];

const renderTools = (tools: Tool[]) =>
  tools.map(([node, w, gap], i) => (
    <ToolSlot key={i} $w={w} $gap={gap}>
      {node}
    </ToolSlot>
  ));

const columns = 'ABCDEFGHIJKLMNOP'.split('');
const rows = Array.from({length: 29}, (_, i) => i + 16);

function SpinField({value, off}: {value: string; off?: boolean}) {
  return (
    <Spin $off={off}>
      <SpinValue>{value}</SpinValue>
      <SpinButton $off={off}><Minus /></SpinButton>
      <SpinButton $off={off}><Plus /></SpinButton>
    </Spin>
  );
}

function App() {
  return (
    <Screen>
      <GlobalStyle />
      <HostPanel>
        <Launcher><Launch /></Launcher>
        <Pager><PagerIcon /></Pager>
        <PanelSlot><SettingsApp /></PanelSlot>
        <PanelSlot><StoreApp /></PanelSlot>
        <PanelSlot><FolderApp /></PanelSlot>
        <TaskList>
          <TaskButton><FirefoxApp /></TaskButton>
          <TaskButton><TerminalApp /></TaskButton>
          <TaskButton $active><QemuApp size={32} /></TaskButton>
          <TaskButton><ShotApp /></TaskButton>
        </TaskList>
        <Tray>
          <TraySlot $w={18} $gap={0}>
            <TrayLine w={18} h={18} d="M9 2a4 5 0 0 0-4 5v4l-2 2h12l-2-2V7a4 5 0 0 0-4-5zM7 15h4M2 2L0 6M16 2l2 4" />
          </TraySlot>
          <TraySlot $w={16} $gap={13}><Activity /></TraySlot>
          <TraySlot $w={16} $gap={14}><Clipboard /></TraySlot>
          <TraySlot $w={18} $gap={13}>
            <TrayLine w={18} h={16} d="M1 6h16v9H1zM9 6V3l3-2M3 9h12M3 12h12" />
          </TraySlot>
          <TraySlot $w={20} $gap={11}><Wifi /></TraySlot>
          <TraySlot $w={10} $gap={15}>
            <TrayLine w={10} h={18} d="M1 5l8 8-4 4V1l4 4-8 8" />
          </TraySlot>
          <TraySlot $w={16} $gap={17}><Speaker color="#f2f2f2" /></TraySlot>
          <TraySlot $w={13} $gap={13}>
            <TrayLine w={13} h={8} d="M1 1l5.500 6L12 1" />
          </TraySlot>
          <Clock>
            5:08 PM
            <small>10/12/22</small>
          </Clock>
          <ShowDesktop />
        </Tray>
      </HostPanel>

      <QemuFrame>
        <QemuTitle>
          <QemuApp size={20} />
          <svg width="12" height="12" viewBox="0 0 12 12">
            <path d="M7 0l5 5-2 1-2 3-1 1-2-2-4 4 3-5-1-2 1-1 3-1z" fill="#222" />
          </svg>
          <QemuName>QEMU</QemuName>
          <FrameControls>
            <WinBtn d="M1 4l5 5 5-5" color="#31363b" width={1} />
            <WinBtn d="M6 1l5 5-5 5-5-5z" color="#31363b" width={1} />
            <WinBtn d="M1.500 1.500l9 9M10.500 1.500l-9 9" color="#31363b" width={1} />
          </FrameControls>
        </QemuTitle>
        <QemuMenu>
          <span>Machine</span>
          <span>View</span>
        </QemuMenu>
      </QemuFrame>

      <Guest>
        <GuestPanel>
          <ToolSlot $w={15} $gap={3}><AppsIcon /></ToolSlot>
          <AppsLabel>Applications</AppsLabel>
          <Handle />
          <GuestTask>
            <CalcDoc w={15} h={18} />
            <span>Untitled 1 - LibreOffice ...</span>
          </GuestTask>
          <GuestTray>
            <WindowSwitch><GuestWindow /></WindowSwitch>
            <GuestSlot $gap={13}><Speaker color="#e8e8e8" /></GuestSlot>
            <GuestSlot $gap={12}><BoltIcon /></GuestSlot>
            <GuestSlot $gap={15}>Wed 12 Oct, 17:09</GuestSlot>
            <GuestSlot $gap={11}>openeuler</GuestSlot>
          </GuestTray>
        </GuestPanel>

        <CalcTitle>
          <CalcDoc w={17} h={20} />
          <TitleText>Untitled 1 - LibreOffice Calc</TitleText>
          <TitleButtons>
            <WinBtn d="M2 8l4-4 4 4" color="#a8a8a8" width={2} />
            <WinBtn d="M1 10h10" color="#a8a8a8" width={2} />
            <WinBtn d="M2.500 3.500h7v5h-7z" color="#a8a8a8" width={2} />
            <WinBtn d="M2 2l8 8M10 2l-8 8" color="#a8a8a8" width={2.400} />
          </TitleButtons>
        </CalcTitle>
        <MenuRow>
          <MenuList>
            {['File', 'Edit', 'View', 'Insert', 'Format', 'Styles', 'Sheet', 'Data', 'Tools'].map(m => (
              <span key={m}>{m}</span>
            ))}
          </MenuList>
          <DocClose><WinBtn d="M2 2l8 8M10 2l-8 8" color="#a8a8a8" width={2} /></DocClose>
        </MenuRow>
        <ToolRow $h={38}>
          <ToolGroup>{renderTools(fileTools)}</ToolGroup>
          <ToolGroup $end={66}>{renderTools(insertTools)}</ToolGroup>
        </ToolRow>
        <ToolRow $h={40}>
          <ToolGroup>
            <Combo $w={207} $btn={35} $gap={4}>
              <span>Liberation Sans</span>
              <div className="arrow"><ComboArrow /></div>
            </Combo>
            <Combo $w={100} $btn={35} $gap={8}>
              <span>10 pt</span>
              <div className="arrow"><ComboArrow /></div>
            </Combo>
            <ToolSlot $w={1} $gap={5}><Separator /></ToolSlot>
            <ToolSlot $w={14} $gap={12}><FormatGlyph $bold>B</FormatGlyph></ToolSlot>
            <ToolSlot $w={10} $gap={22}><FormatGlyph $italic>I</FormatGlyph></ToolSlot>
            <ToolSlot $w={14} $gap={18}><FormatGlyph $under>U</FormatGlyph></ToolSlot>
          </ToolGroup>
          <ToolGroup $end={2}>{renderTools(numberTools)}</ToolGroup>
        </ToolRow>

        <WorkRow>
          <SheetColumn>
            <FormulaRow>
              <Combo $w={161} $btn={35} $gap={4}>
                <span>D21</span>
                <div className="arrow"><ComboArrow /></div>
              </Combo>
              <ToolSlot $w={1} $gap={5}><Separator $h={26} /></ToolSlot>
              <ToolSlot $w={17} $gap={8}><FormulaFx>fx</FormulaFx></ToolSlot>
              <ToolSlot $w={15} $gap={9}>
                <svg width="15" height="15" viewBox="0 0 15 15">
                  <path d="M1 1l13 13M14 1L1 14" stroke="#c0c0c0" strokeWidth="1.500" />
                </svg>
              </ToolSlot>
              <ToolSlot $w={15} $gap={11}>
                <svg width="15" height="13" viewBox="0 0 15 13">
                  <path d="M1 7l4 5 9-11" fill="none" stroke="#c0c0c0" strokeWidth="1.500" />
                </svg>
              </ToolSlot>
              <FormulaInput>H20</FormulaInput>
              <FormulaArrow><ComboArrow /></FormulaArrow>
            </FormulaRow>
            <SheetArea>
              <Grid>
                <GridRow $h={18}>
                  <HeaderCell />
                  {columns.map(c => (
                    <HeaderCell key={c} $on={c === 'D'}>{c}</HeaderCell>
                  ))}
                </GridRow>
                {rows.map(r => (
                  <GridRow key={r} $h={r === 23 ? 31 : 17}>
                    <HeaderCell $side $on={r === 21}>{r}</HeaderCell>
                    {columns.map(c => (
                      <Cell key={c}>{r === 21 && c === 'D' ? 'H20' : ''}</Cell>
                    ))}
                  </GridRow>
                ))}
              </Grid>
              <ScrollTrack><ScrollCap /></ScrollTrack>
            </SheetArea>
          </SheetColumn>
          <Sidebar>
            <Hamburger />
            <DeckButton $on><DeckProps /></DeckButton>
            <DeckButton><DeckStyles /></DeckButton>
            <DeckButton><DeckGallery /></DeckButton>
            <DeckButton><DeckCompass /></DeckButton>
            <DeckButton><DeckFx>fx</DeckFx></DeckButton>
          </Sidebar>
        </WorkRow>
      </Guest>
      <SideGrip />

      <Dialog>
        <DialogTitle>
          <WindowGlyph />
          <DialogName>Character</DialogName>
          <DialogButtons>
            <WinBtn d="M2 8l4-4 4 4" color="#333" width={2} />
            <WinBtn d="M2 2l8 8M10 2l-8 8" color="#333" width={2.400} />
          </DialogButtons>
        </DialogTitle>
        <DialogBody>
          <Notebook>
            <TabBar>
              <Tab>Font</Tab>
              <Tab>Font Effects</Tab>
              <Tab $on>Position</Tab>
            </TabBar>
            <TabPage>
              <SectionTitle $top={0}>Position</SectionTitle>
              <PositionRow>
                <RadioColumn>
                  <RadioRow><Radio />Normal</RadioRow>
                  <RadioRow><Radio />Superscript</RadioRow>
                  <RadioRow $focus><Radio $on />Subscript</RadioRow>
                </RadioColumn>
                <FieldGrid>
                  <FieldLabel $off>Raise/lower by</FieldLabel>
                  <SpinField value="8%" off />
                  <FieldLabel>Relative font size</FieldLabel>
                  <SpinField value="58%" />
                </FieldGrid>
                <CheckWrap $gap={16} $drop={19}>
                  <CheckBox $on><Tick /></CheckBox>
                  Automatic
                </CheckWrap>
              </PositionRow>
              <SectionTitle $top={12}>Scaling</SectionTitle>
              <FieldRow>
                <FieldLabel $w={125}>Scale width</FieldLabel>
                <SpinField value="100%" />
                <CheckWrap $gap={16}>
                  <CheckBox />
                  Fit to line
                </CheckWrap>
              </FieldRow>
              <SectionTitle $top={12}>Spacing</SectionTitle>
              <FieldRow>
                <FieldLabel $w={254}>Character spacing</FieldLabel>
                <SpinField value="0.0 pt" />
                <CheckWrap $gap={16}>
                  <CheckBox />
                  Pair kerning
                </CheckWrap>
              </FieldRow>
              <Preview>
                <PreviewLine />
                <PreviewText>Liberation Sans</PreviewText>
                <PreviewLine />
              </Preview>
            </TabPage>
          </Notebook>
          <ButtonRow>
            <Button $last>Help</Button>
            <Button>Reset</Button>
            <Button>Cancel</Button>
            <Button>OK</Button>
          </ButtonRow>
        </DialogBody>
      </Dialog>
    </Screen>
  );
}

export default App;
